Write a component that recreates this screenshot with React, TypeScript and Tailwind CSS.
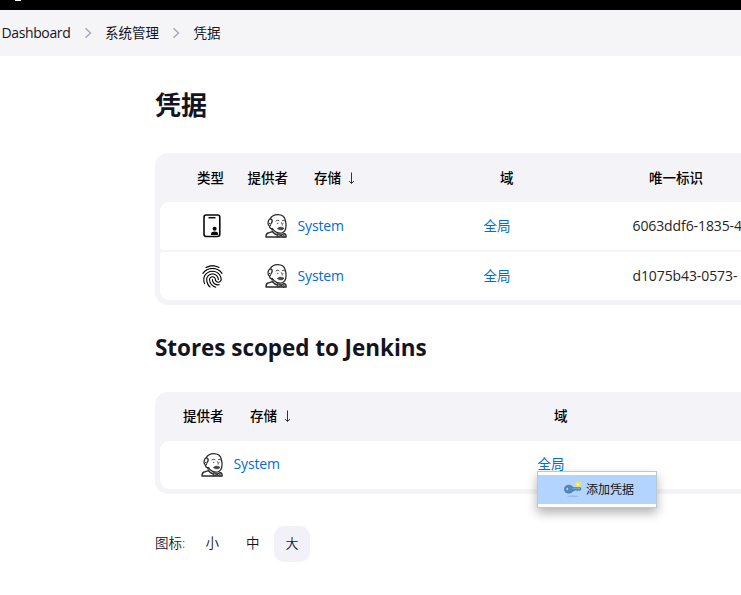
import { MdFingerprint } from "react-icons/md";

function Chevron() {
  return (
    <svg className="h-3 w-2 shrink-0" viewBox="0 0 8 12" fill="none" stroke="#a5a5ba" strokeWidth="1.4">
      <path d="M1.5 1.3 6.5 6l-5 4.7" />
    </svg>
  );
}

function Butler() {
  return (
    <svg className="h-6 w-[22px] shrink-0" viewBox="0 0 66 72" fill="none" stroke="#2a2a2a" strokeWidth="3.8" strokeLinejoin="round" strokeLinecap="round">
      <path d="M3 69c0-8 4-13 10-13l9-3 8 7 12 5 9-3 8-3c4 2 5 5 4 10z" fill="#fff" strokeWidth="4.4" />
      <path d="M15 15C20 6 28 2 38 2c12 0 21 6 23 17 1 6 3 10 2 16 0 11-4 19-13 22-9 2-22-3-28-13" fill="#fff" />
      <path d="M15 15c-4 1-5 5-6 11-1 5 2 8 4 10 1 6 4 9 9 9M18 15c7 4 3 9 1 13" />
      <path d="M13 28c5-1 6 4 3 8M20 45c1 6 5 11 9 14" strokeWidth="3" />
      <path d="M33 21c3-3 6-3 9-1M52 20c2-2 4-1 6 0" strokeWidth="3" />
      <path d="M37 28h2M54 28v.5M49 26c1 5 6 7 2 9" strokeWidth="2.4" />
      <path d="M38 43c5-4 9-4 12-2 3-1 5 1 7 2-4 5-9 5-13 4z" fill="#444" strokeWidth="2.2" />
      <path d="m38 59 11 5-11 5zM49 64l8-6v11z" fill="#999" strokeWidth="2.6" />
    </svg>
  );
}

function DomainCard() {
  return (
    <svg className="h-6 w-[18px]" viewBox="0 0 18 24" fill="none" stroke="#090909" strokeWidth="1.6">
      <rect x="1" y="1" width="15.8" height="21.5" rx="2.2" />
      <path d="M5.5 3.7h7" strokeWidth="1.5" />
      <circle cx="11.6" cy="14.7" r="2" fill="#090909" stroke="none" />
      <path d="M8 21v-1.2c0-1.5 1.7-2.3 3.6-2.3s3.6.8 3.6 2.3V21z" fill="#090909" stroke="none" />
    </svg>
  );
}

function SortArrow() {
  return (
    <svg className="ml-[7px] h-[13px] w-[7px]" viewBox="0 0 7 13" fill="none" stroke="#333" strokeWidth="1">
      <path d="M3.5 .5v11M1 9l2.5 2.5L6 9" />
    </svg>
  );
}

function NewKey() {
  return (
    <svg className="h-[17px] w-[18px] shrink-0" viewBox="0 0 18 17">
      <ellipse cx="9" cy="15.3" rx="6" ry=".8" fill="#8ca7c9" opacity=".6" />
      <path d="M7.8 6.5h8.6l.7 1.7-1 1.3h-1l-.8-.6-.9.7h-1l-.8-.5-.9.7H8z" fill="#5587b9" stroke="#416f9f" strokeWidth=".5" />
      <ellipse cx="4.8" cy="8.2" rx="4.2" ry="3.9" fill="#5589bd" stroke="#416f9f" strokeWidth=".7" />
      <ellipse cx="3.3" cy="8" rx=".9" ry="1.3" fill="#b9d3ef" />
      <path d="M8 7.6h8" stroke="#8ab4de" strokeWidth=".7" />
      <path d="m14 .2 1 1 1.5-.1.1 1.4.9.9-.9.9-.1 1.4-1.5-.1-1 .9-1-.9-1.4.1-.1-1.4-.9-.9.9-.9.1-1.4 1.4.1z" fill="#ebe94e" />
      <circle cx="14" cy="3.5" r="1.1" fill="#ffffa0" />
    </svg>
  );
}

const cell = "flex items-center whitespace-nowrap";
const link = "text-[#006bdb]";
const latin = "pb-[2px] font-['Open_Sans','Noto_Sans',sans-serif] text-[14px]";

function CredentialRow({ kind, id }: { kind: "card" | "finger"; id: string }) {
  return (
    <div className={`grid h-12 grid-cols-[105px_32.5px_186px_149px_1fr] bg-white text-[14px] ${kind === "card" ? "rounded-tl-[9px] rounded-bl-[3px]" : "rounded-tl-[3px] rounded-bl-[9px]"}`}>
      <div className={`${cell} pl-[43px]`}>
        {kind === "card" ? <DomainCard /> : <MdFingerprint className="-ml-[4.5px] size-[27px] text-black" />}
      </div>
      <div className={cell}><Butler /></div>
      <div className={`${cell} ${link} ${latin} tracking-[-0.15px]`}>System</div>
      <div className={`${cell} ${link} text-[13.5px]`}>全局</div>
      <div className={`${cell} ${latin} min-w-0 overflow-hidden tracking-[-0.1px] text-[#252525]`}>{id}</div>
    </div>
  );
}

export default function App() {
  return (
    <div className="h-[595px] w-[741px] overflow-hidden bg-white font-['Noto_Sans','Noto_Sans_CJK_SC',sans-serif] text-[14px] text-[#14141f]">
      <header className="h-2.5 bg-black pl-[15px]"><div className="h-px w-1.5 bg-white" /></header>
      <nav className="flex h-[46px] items-center bg-[#f5f5f8] pl-[1.5px] text-[13.5px] whitespace-nowrap">
        <span className={`${latin} w-[69px] tracking-[-0.38px]`}>Dashboard</span>
        <span className="ml-[13px] flex"><Chevron /></span>
        <span className="ml-[13.5px] w-[54px]">系统管理</span>
        <span className="ml-[13px] flex"><Chevron /></span>
        <span className="ml-[13.5px]">凭据</span>
      </nav>
      <main className="pl-[155px]">
        <h1 className="h-[97px] pt-[30px] text-[26px] leading-[38px] font-bold">凭据</h1>
        <section className="h-[152px] rounded-l-[13px] bg-[#f3f3f8] pl-[5px]">
          <div className="grid h-[49px] grid-cols-[87.5px_66.5px_186px_149px_1fr] pt-px text-[13.5px] font-medium text-black">
            <div className={`${cell} pl-[37px]`}>类型</div>
            <div className={cell}>提供者</div>
            <div className={cell}>存储<SortArrow /></div>
            <div className={cell}>域</div>
            <div className={cell}>唯一标识</div>
          </div>
          <div className="flex flex-col gap-0.5">
            <CredentialRow kind="card" id="6063ddf6-1835-4" />
            <CredentialRow kind="finger" id="d1075b43-0573-" />
          </div>
        </section>
        <h2 className="h-[87px] pt-[27px] font-['Open_Sans','Noto_Sans',sans-serif] text-[22.5px] leading-8 font-bold tracking-[-0.05px] whitespace-nowrap">Stores scoped to Jenkins</h2>
        <section className="h-[102px] rounded-l-[13px] bg-[#f3f3f8] pl-[5px]">
          <div className="grid h-[49px] grid-cols-[90px_304px_1fr] text-[13.5px] font-medium text-black">
            <div className={`${cell} pl-[23px]`}>提供者</div>
            <div className={cell}>存储<SortArrow /></div>
            <div className={cell}>域</div>
          </div>
          <div className="grid h-12 grid-cols-[73.5px_304px_1fr] rounded-l-[9px] bg-white">
            <div className={`${cell} pl-[41px]`}><Butler /></div>
            <div className={`${cell} ${link} ${latin} pb-[4px] tracking-[-0.15px]`}>System</div>
            <div className={`${cell} ${link} relative pb-[2px] text-[13.5px]`}>
              全局
              <div className="absolute top-[30px] -left-[0.5px] z-10 h-[37px] w-[120px] border border-[#bbc8cf] bg-white py-[3px] shadow-[0_5px_10px_rgba(0,0,0,0.3)]">
                <div className="flex h-[29px] items-center gap-[4px] bg-[#b3d4ff] pl-[26px] text-[12px] text-[#151515]">
                  <NewKey /><span>添加凭据</span>
                </div>
              </div>
            </div>
          </div>
        </section>
        <footer className="mt-8 flex h-9 items-center text-[13.5px] font-[350]">
          <span className="w-[50.5px] pb-px">图标:</span>
          <span className="w-[40.5px] pb-px">小</span>
          <span className="w-7 pb-px">中</span>
          <span className="flex size-9 items-center justify-center rounded-[10px] bg-[#f1f1f7] pb-px text-[13px]">大</span>
        </footer>
      </main>
    </div>
  );
}
